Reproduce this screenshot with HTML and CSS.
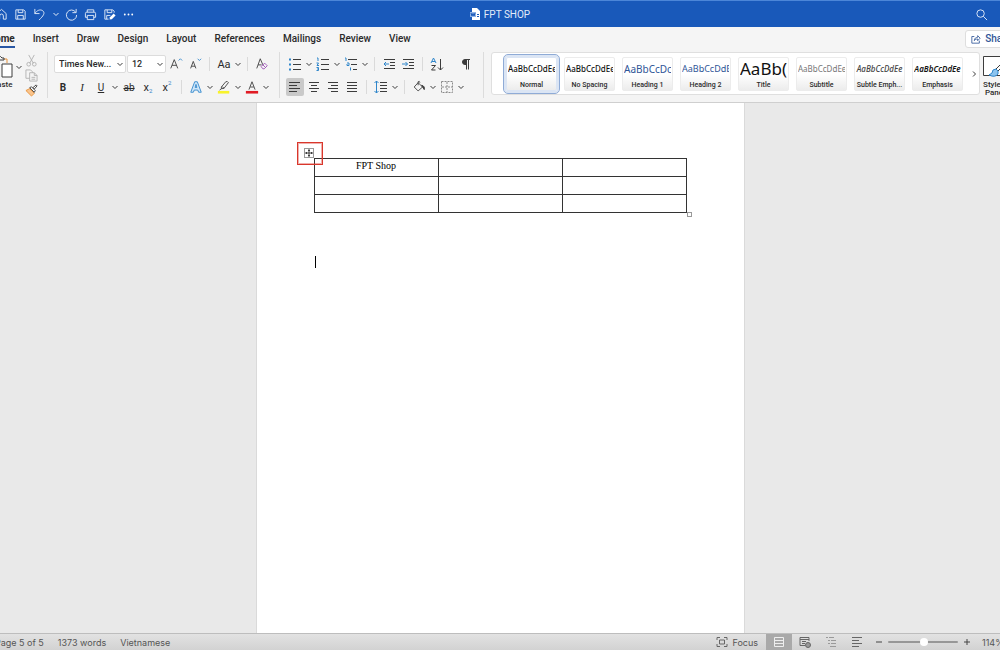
FILE: index.html
```html
<!DOCTYPE html>
<html lang="en">
  <head>
    <meta charset="utf-8">
    <title>FPT SHOP</title>
    <link rel="stylesheet" href="styles.css">
  </head>
  <body>
    <svg class="defs" aria-hidden="true">
      <symbol id="chev" viewBox="0 0 8 8"><path d="M1.500 3L4 5.500 6.500 3"/></symbol>
    </svg>

    <header class="titlebar">
      <div class="quick">
        <button aria-label="Home"><svg viewBox="0 0 14 14"><path d="M2 6l5-4.500 5 4.500v6H9V8.500a2 2 0 0 0-4 0V12H2z"/></svg></button>
        <button aria-label="Save"><svg viewBox="0 0 14 14"><path d="M2 2h8.500L12 3.500V12H2zM4.500 2v3h5V2M4 12V8h6v4"/></svg></button>
        <button aria-label="Undo"><svg viewBox="0 0 14 14"><path d="M2 1v5h5M2 6c2-3.500 6-5 8.500-3 3 2.500.5 5.500-4 10"/></svg></button>
        <button class="drop" aria-label="Undo history"><svg viewBox="0 0 8 8"><use href="#chev"/></svg></button>
        <button aria-label="Redo"><svg viewBox="0 0 14 14"><path d="M11.500 4.500A5.500 5.500 0 1 0 12.500 7.500M12 1v4H8"/></svg></button>
        <button aria-label="Print"><svg viewBox="0 0 14 14"><path d="M3.500 4.500V2h7v2.500M3.500 10H1.500V6q0-1.500 1.500-1.500h8q1.500 0 1.500 1.500v4h-2M3.500 8h7v4.500h-7z"/></svg></button>
        <button aria-label="Save as"><svg viewBox="0 0 14 14"><path d="M6 12H2V2h8.500L12 3.500V5M4.500 2v3h5V2M4 12V8h4"/><path class="solid" d="M7 12.500l.5-2.500 4-4 2 2-4 4z"/></svg></button>
        <button aria-label="More"><svg viewBox="0 0 14 14"><circle class="solid" cx="3" cy="7" r="1"/><circle class="solid" cx="7" cy="7" r="1"/><circle class="solid" cx="11" cy="7" r="1"/></svg></button>
      </div>
      <h1 class="doc-title">
        <svg viewBox="0 0 11 12"><path d="M2 0h5l3 3v9H2z" fill="#fff"/><path d="M0 4h6v5H0z" fill="#8fb3e6"/><path d="M1 5l1 3 1-2.500L4 8l1-3M7 6.500h2M7 8.500h2" fill="none" stroke="#1959ba"/></svg>
        FPT SHOP
      </h1>
      <button class="search" aria-label="Search"><svg viewBox="0 0 14 14"><circle cx="6" cy="6" r="4"/><path d="M9 9l4 4"/></svg></button>
    </header>

    <nav class="tabs">
      <a href="#" class="active">Home</a>
      <a href="#">Insert</a>
      <a href="#">Draw</a>
      <a href="#">Design</a>
      <a href="#">Layout</a>
      <a href="#">References</a>
      <a href="#">Mailings</a>
      <a href="#">Review</a>
      <a href="#">View</a>
      <button class="share"><svg viewBox="0 0 12 12"><path d="M4 3H1v8h9V8M4 8c0-3 2-4 4-4V2l3 3-3 3V6C6 6 5 6.500 4 8z"/></svg>Share</button>
    </nav>

    <section class="ribbon">
      <div class="clipboard">
        <div class="paste">
          <div class="split">
            <button class="paste-icon" aria-label="Paste clipboard"><svg viewBox="0 0 22 24"><path class="orange" d="M8 18H2V4h3M12 4h3v4"/><path d="M5 5V3h2q1.500-3 3 0h2v2z"/><path d="M10 9h10v13H10z" fill="#fff"/></svg></button>
            <button class="drop" aria-label="Paste options"><svg viewBox="0 0 8 8"><use href="#chev"/></svg></button>
          </div>
          <span>Paste</span>
        </div>
        <div class="clip-tools">
          <button aria-label="Cut"><svg class="faded" viewBox="0 0 14 14"><path d="M4 1l5 9M10 1L5 10"/><circle cx="4" cy="11" r="2"/><circle cx="10" cy="11" r="2"/></svg></button>
          <button aria-label="Copy"><svg class="faded" viewBox="0 0 14 14"><path d="M5 10H1V1h5l2 2v1M5 4h5l3 3v6H5zM10 4v3h3M7 9h4M7 11h4"/></svg></button>
          <button aria-label="Format painter"><svg viewBox="0 0 14 14"><path class="orange" d="M1 7l6 6 3-3-5-5z" fill="#f9c48d"/><path d="M5 4l5 5 1-2-4-4z" fill="#fff"/><path d="M8.500 4L12 1l1 1-3 3.500z" fill="#fff"/></svg></button>
        </div>
      </div>

      <div class="group">
        <div class="row">
          <label class="picker font-name">
            <select aria-label="Font"><option>Times New...</option></select>
            <svg viewBox="0 0 8 8"><use href="#chev"/></svg>
          </label>
          <label class="picker font-size">
            <select aria-label="Font size"><option>12</option></select>
            <svg viewBox="0 0 8 8"><use href="#chev"/></svg>
          </label>
          <button class="tool" aria-label="Increase font size"><svg viewBox="0 0 16 16"><path d="M2 13L6 3l4 10M3.500 9.500h5"/><path class="blue" d="M11 4l2-2 2 2"/></svg></button>
          <button class="tool" aria-label="Decrease font size"><svg viewBox="0 0 16 16"><path d="M3 13l3-8 3 8M4 10.500h4"/><path class="blue" d="M11 2l2 2 2-2"/></svg></button>
          <i class="sep"></i>
          <div class="split"><button class="tool">Aa</button><button class="drop" aria-label="Change case"><svg viewBox="0 0 8 8"><use href="#chev"/></svg></button></div>
          <i class="sep"></i>
          <button class="tool" aria-label="Clear formatting"><svg viewBox="0 0 16 16"><path d="M2 13L6 2l3 7M3.500 9h4"/><path class="purple" d="M7 11l4-4 3 3-3.500 3.500H9zM9 9l3 3"/></svg></button>
        </div>
        <div class="row">
          <button class="tool bold">B</button>
          <button class="tool italic">I</button>
          <div class="split"><button class="tool under">U</button><button class="drop" aria-label="Underline style"><svg viewBox="0 0 8 8"><use href="#chev"/></svg></button></div>
          <button class="tool strike">ab</button>
          <button class="tool script" aria-label="Subscript">x<sub>2</sub></button>
          <button class="tool script" aria-label="Superscript">x<sup>2</sup></button>
          <i class="sep"></i>
          <div class="split"><button class="tool" aria-label="Text effects"><svg viewBox="0 0 16 16"><path class="blue" d="M2 14L6.500 2h3L14 14h-3l-1-2.500H6L5 14zM7 8.500h2L8 5z" fill="#cfe6f8"/></svg></button><button class="drop" aria-label="Effects menu"><svg viewBox="0 0 8 8"><use href="#chev"/></svg></button></div>
          <div class="split"><button class="tool" aria-label="Highlight"><svg viewBox="0 0 16 16"><path d="M1 12.500h13v3H1z" class="yellow"/><path d="M5 10V8l5-6q2-1 3 1L8 9.500zM5 10l-2 1.500M6 7.500l2 2"/></svg></button><button class="drop" aria-label="Highlight colour"><svg viewBox="0 0 8 8"><use href="#chev"/></svg></button></div>
          <div class="split"><button class="tool" aria-label="Font colour"><svg viewBox="0 0 16 16"><path d="M1 12.500h14v3H1z" class="red"/><path d="M4.500 11L8 2l3.500 9M6 8h4"/></svg></button><button class="drop" aria-label="Colour menu"><svg viewBox="0 0 8 8"><use href="#chev"/></svg></button></div>
        </div>
      </div>

      <div class="group">
        <div class="row">
          <div class="split"><button class="tool" aria-label="Bullets"><svg viewBox="0 0 14 14"><path d="M5 2.500h8M5 7.500h8M5 12.500h8"/><path class="blue dot" d="M1 2.500h2M1 7.500h2M1 12.500h2"/></svg></button><button class="drop" aria-label="Bullet style"><svg viewBox="0 0 8 8"><use href="#chev"/></svg></button></div>
          <div class="split"><button class="tool" aria-label="Numbering"><svg viewBox="0 0 14 14"><path d="M5 2.500h8M5 7.500h8M5 12.500h8"/><path class="blue" d="M1 1h1v3M.5 6h2L1 8.500h2M.5 10.500h2v3h-2M1 12h1"/></svg></button><button class="drop" aria-label="Number style"><svg viewBox="0 0 8 8"><use href="#chev"/></svg></button></div>
          <div class="split"><button class="tool" aria-label="Multilevel list"><svg viewBox="0 0 14 14"><path d="M4 2.500h9M7 7.500h6M9 12.500h4"/><path class="blue" d="M1 1h1v3M3 6h2v2.500H3V7M6.500 10.500v3"/></svg></button><button class="drop" aria-label="List style"><svg viewBox="0 0 8 8"><use href="#chev"/></svg></button></div>
          <i class="sep"></i>
          <button class="tool" aria-label="Decrease indent"><svg viewBox="0 0 14 14"><path d="M2 2.500h11M8 5.500h5M8 8.500h5M2 11.500h11"/><path class="blue" d="M7 7H2M4 5L2 7l2 2"/></svg></button>
          <button class="tool" aria-label="Increase indent"><svg viewBox="0 0 14 14"><path d="M2 2.500h11M8 5.500h5M8 8.500h5M2 11.500h11"/><path class="blue" d="M1 7h5.500M4.500 5l2 2-2 2"/></svg></button>
          <i class="sep"></i>
          <button class="tool" aria-label="Sort"><svg viewBox="0 0 14 14"><path class="blue" d="M1 6l2.500-5L6 6M2 4.500h3"/><path d="M1.500 8.500h4l-4 4.500h4M10.500 2v11M8 10.500l2.500 2.500 2.500-2.500"/></svg></button>
          <button class="tool marks" aria-label="Show marks"><svg viewBox="0 0 14 14"><path d="M11 2.500H6M7.500 2.500v10M9.500 2.500v10"/><path class="ink" d="M7.500 2.500H6a2.500 2.500 0 0 0 0 5h1.500z"/></svg></button>
        </div>
        <div class="row">
          <button class="tool pressed" aria-label="Align left"><svg viewBox="0 0 14 14"><path d="M1 2.500h11M1 5.500h8M1 8.500h11M1 11.500h8"/></svg></button>
          <button class="tool" aria-label="Centre"><svg viewBox="0 0 14 14"><path d="M2 2.500h10M4 5.500h6M2 8.500h10M4 11.500h6"/></svg></button>
          <button class="tool" aria-label="Align right"><svg viewBox="0 0 14 14"><path d="M2 2.500h10M5 5.500h7M2 8.500h10M5 11.500h7"/></svg></button>
          <button class="tool" aria-label="Justify"><svg viewBox="0 0 14 14"><path d="M2 2.500h10M2 5.500h10M2 8.500h10M2 11.500h10"/></svg></button>
          <i class="sep"></i>
          <div class="split"><button class="tool" aria-label="Line spacing"><svg viewBox="0 0 14 14"><path d="M6 2.500h7M6 5.500h7M6 8.500h7M6 11.500h7"/><path class="blue" d="M2.500 1v12M.5 3l2-2 2 2M.5 11l2 2 2-2"/></svg></button><button class="drop" aria-label="Spacing menu"><svg viewBox="0 0 8 8"><use href="#chev"/></svg></button></div>
          <i class="sep"></i>
          <div class="split"><button class="tool" aria-label="Shading"><svg viewBox="0 0 16 16"><path d="M7 3l5 5-5 4.500L2.500 8zM7 6V2q1.500-1.500 2 1"/><path class="ink" d="M11 6q4 1 3 5l-2-3z"/></svg></button><button class="drop" aria-label="Shading colour"><svg viewBox="0 0 8 8"><use href="#chev"/></svg></button></div>
          <div class="split"><button class="tool" aria-label="Borders"><svg viewBox="0 0 14 14"><path class="dashed" d="M1.500 1.500h11v11h-11zM7 2v10M2 7h10"/></svg></button><button class="drop" aria-label="Border menu"><svg viewBox="0 0 8 8"><use href="#chev"/></svg></button></div>
        </div>
      </div>

      <div class="gallery">
        <button class="style selected"><span class="sample">AaBbCcDdEe</span><span class="name">Normal</span></button>
        <button class="style"><span class="sample">AaBbCcDdEe</span><span class="name">No Spacing</span></button>
        <button class="style"><span class="sample h1">AaBbCcDc</span><span class="name">Heading 1</span></button>
        <button class="style"><span class="sample h2">AaBbCcDdEe</span><span class="name">Heading 2</span></button>
        <button class="style"><span class="sample title">AaBb(</span><span class="name">Title</span></button>
        <button class="style"><span class="sample subtitle">AaBbCcDdEe</span><span class="name">Subtitle</span></button>
        <button class="style"><span class="sample subtle">AaBbCcDdEe</span><span class="name">Subtle Emph...</span></button>
        <button class="style"><span class="sample emphasis">AaBbCcDdEe</span><span class="name">Emphasis</span></button>
        <button class="more" aria-label="More styles"><svg viewBox="0 0 8 8"><path d="M3 1.500L5.500 4 3 6.500"/></svg></button>
      </div>

      <button class="pane">
        <svg viewBox="0 0 24 24"><path d="M1.500 1.500h21v19h-21z" fill="#fff"/><path d="M23 5l-9 9 2 2 8-8z" fill="#fff"/><path class="blue" d="M14 14q-4 0-4 4l-3 2q6 3 9-1v-3z" fill="#8cc4ef"/></svg>
        <span>Styles<br>Pane</span>
      </button>
    </section>

    <main class="canvas">
      <article class="page">
        <div class="table-wrap">
          <table>
            <tr><td>FPT Shop</td><td></td><td></td></tr>
            <tr><td></td><td></td><td></td></tr>
            <tr><td></td><td></td><td></td></tr>
          </table>
          <span class="callout"></span>
          <button class="move" aria-label="Move table"><svg viewBox="0 0 8 8"><path d="M4 0v8M0 4h8M3 1.500h2M3 6.500h2M1.500 3v2M6.500 3v2"/></svg></button>
          <span class="resize"></span>
        </div>
        <p class="line"><span class="caret"></span></p>
      </article>
    </main>

    <footer class="status">
      <span>Page 5 of 5</span>
      <span>1373 words</span>
      <span>Vietnamese</span>
      <div class="view">
        <button class="focus"><svg viewBox="0 0 12 12"><path d="M1 4V1.500h3M8 1.500h3V4M11 8v2.500H8M4 10.500H1V8M3.500 4h5v4h-5z"/></svg>Focus</button>
        <button class="mode on" aria-label="Print layout"><svg viewBox="0 0 12 12"><path d="M1.500 1.500h9v9h-9zM1 4.500h10M1 7.500h10"/></svg></button>
        <button class="mode" aria-label="Web layout"><svg viewBox="0 0 12 12"><path d="M6 9.500H1v-8h9V5M1 3.500h9M3 5.500h4M3 7.500h3"/><circle cx="9" cy="9" r="2.500" fill="#999"/></svg></button>
        <button class="mode" aria-label="Outline"><svg viewBox="0 0 12 12"><path class="light" d="M1 1.500h2M4 1.500h5M3 4.500h2M6 4.500h5M3 7.500h2M6 7.500h5M5 10.500h6"/></svg></button>
        <button class="mode" aria-label="Draft"><svg viewBox="0 0 12 12"><path d="M1 1.500h10M1 4.500h7M1 7.500h10M1 10.500h7"/></svg></button>
        <button class="step" aria-label="Zoom out"><svg viewBox="0 0 8 8"><path d="M1 4h6"/></svg></button>
        <input type="range" class="zoom" min="0" max="100" value="51" aria-label="Zoom">
        <button class="step" aria-label="Zoom in"><svg viewBox="0 0 8 8"><path d="M1 4h6M4 1v6"/></svg></button>
        <span class="percent">114%</span>
      </div>
    </footer>
  </body>
</html>
```

FILE: styles.css
```css
*{
  box-sizing: border-box;
}
body{
  margin: 0;
  height: 100vh;
  display: flex;
  flex-direction: column;
  overflow: hidden;
  background-color: #e9e9e9;
  color: #2b2b2b;
  font-family: Roboto, "Liberation Sans", sans-serif;
  font-size: 10px;
}
button{
  display: flex;
  align-items: center;
  justify-content: center;
  padding: 0;
  border: none;
  background: none;
  color: inherit;
  font: inherit;
  cursor: pointer;
}
svg{
  display: block;
  flex: none;
  fill: none;
  stroke: #3c3c3c;
  stroke-width: 1;
}
.defs{
  position: absolute;
  width: 0;
  height: 0;
}

/* title bar */
.titlebar{
  display: grid;
  grid-template-columns: 1fr auto 1fr;
  align-items: center;
  flex: none;
  height: 27px;
  border-top: 1px solid #4c86d8;
  background-color: #1959ba;
  color: #e3ecf9;
}
.titlebar svg{
  width: 13px;
  height: 13px;
  stroke: #e3ecf9;
}
.titlebar .solid{
  fill: #fff;
  stroke: none;
}
.quick{
  display: flex;
  align-items: center;
  gap: 6px;
  margin-left: -5px;
}
.titlebar .drop svg{
  width: 8px;
  height: 8px;
}
.quick .drop{
  margin: 0 -1px;
}
.doc-title{
  display: flex;
  align-items: center;
  gap: 3px;
  margin: 0;
  font-size: 10px;
  font-weight: 400;
}
.titlebar .doc-title svg{
  width: 11px;
  height: 12px;
  stroke: none;
}
.search{
  justify-self: end;
  margin-right: 12px;
}

/* tabs */
.tabs{
  display: flex;
  align-items: center;
  gap: 18px;
  flex: none;
  height: 23px;
  margin-left: -12px;
  background-color: #f5f5f5;
}
.tabs a{
  height: 19px;
  line-height: 20px;
  color: #2b2b2b;
  font-weight: 500;
  text-decoration: none;
}
.tabs .active{
  border-bottom: 2px solid #2a58a5;
  font-weight: 700;
}
.share{
  gap: 4px;
  height: 18px;
  margin-left: auto;
  margin-right: -20px;
  padding: 0 8px 0 5px;
  border: 1px solid #dedede;
  border-radius: 3px;
  background-color: #fff;
  color: #2f5597;
  font-weight: 500;
}
.share svg{
  width: 10px;
  height: 10px;
  stroke: #2f5597;
}

/* ribbon */
.ribbon{
  display: flex;
  flex: none;
  height: 53px;
  padding-top: 2px;
  border-bottom: 1px solid #cfcfcf;
  background-color: #f4f4f4;
}
.clipboard{
  display: flex;
  gap: 4px;
  flex: none;
  width: 48px;
  margin-bottom: 4px;
  border-right: 1px solid #dcdcdc;
}
.paste{
  display: flex;
  flex-direction: column;
  align-items: flex-start;
  gap: 1px;
  flex: none;
  width: 29px;
  margin-left: -8px;
  padding-top: 3px;
  font-size: 8px;
  font-weight: 500;
}
.paste-icon svg{
  width: 22px;
  height: 24px;
}
.clip-tools{
  display: flex;
  flex-direction: column;
  gap: 2px;
  padding-top: 2px;
}
.clip-tools svg{
  width: 13px;
  height: 13px;
}
.faded{
  opacity: 0.35;
}
.group{
  display: flex;
  flex-direction: column;
  flex: none;
  gap: 5px;
  margin-bottom: 4px;
  padding: 3px 8px 0 6px;
  border-right: 1px solid #dcdcdc;
}
.row{
  display: flex;
  align-items: center;
  gap: 1px;
  height: 18px;
}
.split{
  display: flex;
  align-items: center;
}
.tool{
  width: 18px;
  height: 18px;
  font-size: 11px;
}
.tool svg{
  width: 14px;
  height: 14px;
}
.drop{
  width: 9px;
  height: 18px;
}
.drop svg, .picker svg, .more svg{
  width: 8px;
  height: 8px;
}
.sep{
  width: 1px;
  height: 14px;
  margin: 0 4px;
  background-color: #dadada;
}
.picker{
  position: relative;
}
.picker select{
  display: block;
  width: 100%;
  height: 18px;
  padding: 0 4px;
  border: 1px solid #dcdcdc;
  border-radius: 2px;
  background-color: #fff;
  color: #2b2b2b;
  font: 500 9px Roboto, "Liberation Sans", sans-serif;
  appearance: none;
}
.picker svg{
  position: absolute;
  top: 5px;
  right: 2px;
  pointer-events: none;
}
.font-name{
  width: 72px;
}
.font-size{
  width: 39px;
}
.bold{
  font-size: 10px;
  font-weight: 700;
}
.italic{
  font-family: "Liberation Serif", serif;
  font-style: italic;
}
.under{
  font-size: 10px;
  text-decoration: underline;
}
.strike{
  font-size: 10px;
  text-decoration: line-through;
}
.script sub, .script sup{
  color: #3a86c8;
  font-size: 6px;
  line-height: 10px;
}
.script sub{
  align-self: flex-end;
}
.script sup{
  align-self: flex-start;
}
.marks{
  margin-left: 10px;
}
.pressed{
  border-radius: 2px;
  background-color: #c9c9c9;
}
.blue{
  stroke: #2f86cb;
}
.dot{
  stroke-width: 2;
}
.orange{
  stroke: #e8933a;
}
.purple{
  stroke: #9a4fb5;
}
.yellow{
  fill: #f8f32b;
  stroke: none;
}
.red{
  fill: #e01b24;
  stroke: none;
}
.ink{
  fill: #3c3c3c;
}
.dashed{
  stroke: #8a8a8a;
  stroke-dasharray: 2 1;
}

/* style gallery */
.gallery{
  display: flex;
  align-items: center;
  gap: 7px;
  flex: none;
  height: 43px;
  margin-left: 7px;
  padding: 0 1px 0 14px;
  border: 1px solid #dfdfdf;
  border-radius: 3px;
  background-color: #fff;
}
.style{
  display: flex;
  flex-direction: column;
  justify-content: flex-start;
  width: 51px;
  height: 34px;
  border: 1px solid #ececec;
  border-radius: 2px;
  background: linear-gradient(#fff 50%, #ececec);
}
.selected{
  border-color: #dbe5f4;
  outline: 1px solid #8fabd6;
  outline-offset: 2px;
  box-shadow: 0 0 0 2px #dbe5f4;
}
.sample{
  width: 47px;
  height: 22px;
  overflow: hidden;
  color: #111;
  font: 500 8px/22px "Noto Sans", "Open Sans", sans-serif;
  text-align: center;
  white-space: nowrap;
}
.name{
  font-size: 7px;
  font-weight: 500;
  line-height: 10px;
  white-space: nowrap;
}
.h1{
  color: #2f5597;
  font-size: 10px;
  font-weight: 400;
  text-align: left;
}
.h2{
  color: #2f5597;
  font-size: 9px;
  font-weight: 400;
  text-align: left;
}
.title{
  font-size: 17px;
  font-weight: 400;
  text-align: left;
}
.subtitle{
  color: #777;
  font-weight: 400;
}
.subtle{
  color: #444;
  font-style: italic;
  font-weight: 500;
}
.emphasis{
  font-style: italic;
  font-weight: 600;
}
.more{
  width: 8px;
}
.pane{
  flex-direction: column;
  justify-content: flex-start;
  flex: none;
  gap: 2px;
  margin-left: 2px;
  padding-top: 3px;
  font-size: 8px;
  font-weight: 500;
  line-height: 8px;
}
.pane svg{
  width: 24px;
  height: 24px;
}

/* document */
.canvas{
  display: flex;
  justify-content: center;
  flex: 1;
  min-height: 0;
}
.page{
  width: 489px;
  padding: 55px 57px 0 57px;
  border: 1px solid #dadada;
  border-width: 0 1px;
  background-color: #fff;
  font-family: "Liberation Serif", serif;
}
.table-wrap{
  position: relative;
}
table{
  width: 100%;
  border-collapse: collapse;
  table-layout: fixed;
  font-size: 10px;
}
td{
  height: 18px;
  padding: 0;
  border: 1px solid #333;
  color: #000;
  line-height: 13px;
  text-align: center;
  vertical-align: top;
}
.callout{
  position: absolute;
  top: -16px;
  left: -17px;
  width: 26px;
  height: 23px;
  border: 1px solid #d9372c;
  outline: 1px solid rgba(217, 55, 44, 0.4);
  outline-offset: -2px;
}
.move{
  position: absolute;
  top: -10px;
  left: -10px;
  width: 10px;
  height: 10px;
  border: 1px solid #999;
  background-color: #fff;
}
.move svg{
  width: 8px;
  height: 8px;
}
.resize{
  position: absolute;
  right: -5px;
  bottom: -4px;
  width: 5px;
  height: 5px;
  border: 1px solid #999;
  background-color: #fff;
}
.line{
  margin: 43px 0 0 1px;
}
.caret{
  display: block;
  width: 1px;
  height: 12px;
  background-color: #000;
}

/* status bar */
.status{
  display: flex;
  align-items: center;
  gap: 14px;
  flex: none;
  height: 17px;
  margin: 0 -4px 0 -5px;
  border-top: 1px solid #bdbdbd;
  background: linear-gradient(#e2e2e2, #d2d2d2);
  color: #555;
  font-family: Inter, "Liberation Sans", sans-serif;
  font-size: 9px;
  white-space: nowrap;
}
.view{
  display: flex;
  align-items: center;
  height: 100%;
  margin-left: auto;
}
.view svg{
  width: 12px;
  height: 12px;
  stroke: #666;
}
.focus{
  gap: 4px;
  margin-right: 8px;
}
.mode{
  width: 26px;
  height: 100%;
}
.view .on{
  background-color: #a9a9a9;
}
.view .on svg{
  stroke: #eee;
}
.view .light{
  stroke: #999;
}
.view .step svg{
  width: 8px;
  height: 8px;
  stroke: #444;
}
.step{
  width: 18px;
}
.zoom{
  width: 70px;
  height: 16px;
  margin: 0;
  background: none;
  appearance: none;
}
.zoom::-webkit-slider-runnable-track{
  height: 2px;
  border-radius: 1px;
  background-color: #979797;
}
.zoom::-webkit-slider-thumb{
  width: 8px;
  height: 8px;
  margin-top: -3px;
  border-radius: 50%;
  background-color: #fff;
  appearance: none;
}
.percent{
  margin-left: 6px;
}
```
